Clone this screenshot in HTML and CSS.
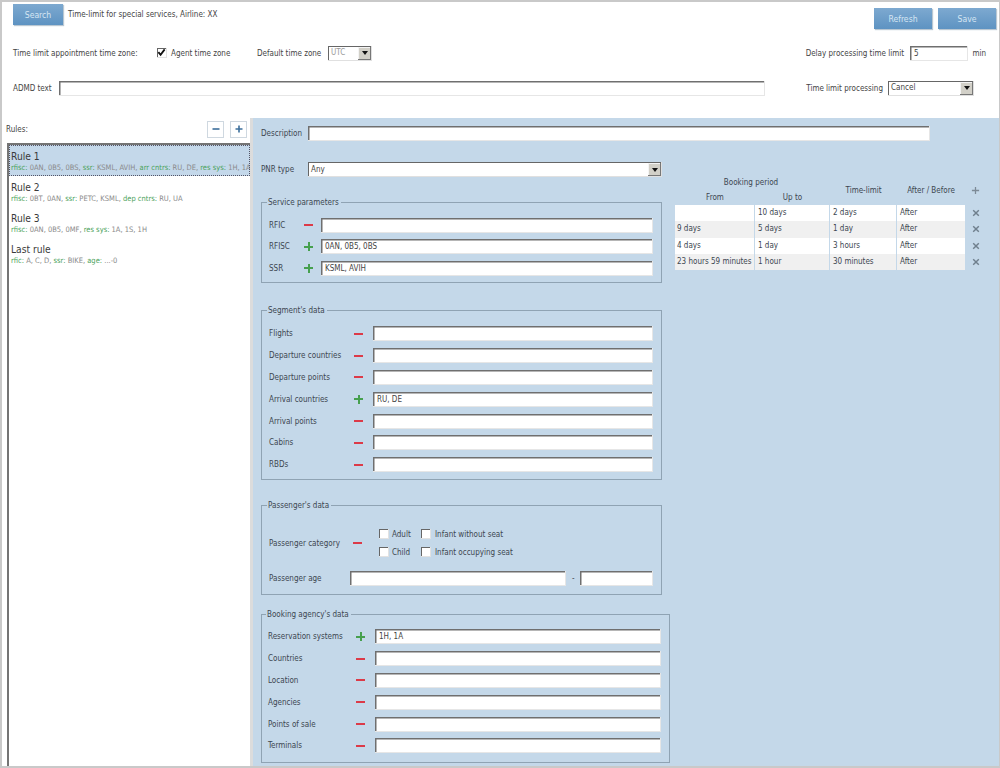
FILE: index.html
```html
<!DOCTYPE html>
<html lang="en">
<head>
<meta charset="utf-8">
<title>Time-limit for special services</title>
<link rel="stylesheet" href="styles.css">
</head>
<body>
<div class="app">
  <header class="top">
    <div class="row-title">
      <button class="btn btn-search">Search</button>
      <span class="title">Time-limit for special services, Airline: XX</span>
      <span class="spacer"></span>
      <button class="btn btn-refresh">Refresh</button>
      <button class="btn btn-save">Save</button>
    </div>
    <div class="row-zone">
      <span class="zone-label">Time limit appointment time zone:</span>
      <span class="box checked"><svg viewBox="0 0 10 10" width="9" height="9"><path d="M1.5 4.5 L4 7.5 L8.5 1.5" fill="none" stroke="#111" stroke-width="2"/></svg></span>
      <span class="agent">Agent time zone</span>
      <span class="default-label">Default time zone</span>
      <div class="select sel-utc"><span class="muted">UTC</span><span class="arrow"><i></i></span></div>
      <span class="spacer"></span>
      <span>Delay processing time limit</span>
      <div class="input delay">5</div>
      <span class="min">min</span>
    </div>
    <div class="row-admd">
      <span class="admd-label">ADMD text</span>
      <div class="input admd"></div>
      <span class="spacer"></span>
      <span>Time limit processing</span>
      <div class="select sel-proc"><span>Cancel</span><span class="arrow"><i></i></span></div>
    </div>
  </header>
  <div class="main">
    <aside class="left">
      <div class="rules-head">
        <span>Rules:</span>
        <span class="spacer"></span>
        <span class="sq"><svg viewBox="0 0 10 10" width="10" height="10"><path d="M1.5 5H8.5" stroke="#3c6f9c" stroke-width="1.6"/></svg></span>
        <span class="sq"><svg viewBox="0 0 10 10" width="10" height="10"><path d="M1.5 5H8.5M5 1.5V8.5" stroke="#3c6f9c" stroke-width="1.6"/></svg></span>
      </div>
      <ul class="rules">
        <li class="rule selected"><div class="rule-name">Rule 1</div><div class="rule-sub"><b>rfisc:</b> 0AN, 0B5, 0BS, <b>ssr:</b> KSML, AVIH, <b>arr cntrs:</b> RU, DE, <b>res sys:</b> 1H, 1A</div></li>
        <li class="rule"><div class="rule-name">Rule 2</div><div class="rule-sub"><b>rfisc:</b> 0BT, 0AN, <b>ssr:</b> PETC, KSML, <b>dep cntrs:</b> RU, UA</div></li>
        <li class="rule"><div class="rule-name">Rule 3</div><div class="rule-sub"><b>rfisc:</b> 0AN, 0B5, 0MF, <b>res sys:</b> 1A, 1S, 1H</div></li>
        <li class="rule"><div class="rule-name">Last rule</div><div class="rule-sub"><b>rfic:</b> A, C, D, <b>ssr:</b> BIKE, <b>age:</b> ...-0</div></li>
      </ul>
    </aside>
    <section class="panel">
      <div class="row-desc">
        <span class="lbl-head">Description</span>
        <div class="input desc"></div>
      </div>
      <div class="columns">
        <div class="form">
          <div class="row-pnr">
            <span class="lbl-head">PNR type</span>
            <div class="select sel-pnr"><span>Any</span><span class="arrow"><i></i></span></div>
          </div>

          <fieldset class="group g-service">
            <legend>Service parameters</legend>
            <div class="frow"><label>RFIC</label><span class="minus"></span><div class="input"></div></div>
            <div class="frow"><label>RFISC</label><span class="plus"></span><div class="input">0AN, 0B5, 0BS</div></div>
            <div class="frow"><label>SSR</label><span class="plus"></span><div class="input">KSML, AVIH</div></div>
          </fieldset>

          <fieldset class="group g-segment">
            <legend>Segment's data</legend>
            <div class="frow"><label>Flights</label><span class="minus"></span><div class="input"></div></div>
            <div class="frow"><label>Departure countries</label><span class="minus"></span><div class="input"></div></div>
            <div class="frow"><label>Departure points</label><span class="minus"></span><div class="input"></div></div>
            <div class="frow"><label>Arrival countries</label><span class="plus"></span><div class="input">RU, DE</div></div>
            <div class="frow"><label>Arrival points</label><span class="minus"></span><div class="input"></div></div>
            <div class="frow"><label>Cabins</label><span class="minus"></span><div class="input"></div></div>
            <div class="frow"><label>RBDs</label><span class="minus"></span><div class="input"></div></div>
          </fieldset>

          <fieldset class="group g-pass">
            <legend>Passenger's data</legend>
            <div class="pcat">
              <label>Passenger category</label><span class="minus"></span>
              <div class="checks">
                <span class="box"></span><span>Adult</span><span class="box"></span><span>Infant without seat</span>
                <span class="box"></span><span>Child</span><span class="box"></span><span>Infant occupying seat</span>
              </div>
            </div>
            <div class="page">
              <label>Passenger age</label>
              <div class="input age-from"></div><span class="dash">-</span><div class="input age-to"></div>
            </div>
          </fieldset>

          <fieldset class="group g-agency">
            <legend>Booking agency's data</legend>
            <div class="frow"><label>Reservation systems</label><span class="plus"></span><div class="input">1H, 1A</div></div>
            <div class="frow"><label>Countries</label><span class="minus"></span><div class="input"></div></div>
            <div class="frow"><label>Location</label><span class="minus"></span><div class="input"></div></div>
            <div class="frow"><label>Agencies</label><span class="minus"></span><div class="input"></div></div>
            <div class="frow"><label>Points of sale</label><span class="minus"></span><div class="input"></div></div>
            <div class="frow"><label>Terminals</label><span class="minus"></span><div class="input"></div></div>
          </fieldset>
        </div>

        <div class="period">
          <div class="phead">
            <div class="ph-group">
              <div class="ph-title">Booking period</div>
              <div class="ph-sub"><span>From</span><span>Up to</span></div>
            </div>
            <div class="ph-tl">Time-limit</div>
            <div class="ph-ab">After / Before</div>
            <div class="ph-act"><svg viewBox="0 0 10 10" width="9" height="9"><path d="M1 5H9M5 1V9" stroke="#7d8a96" stroke-width="1.4"/></svg></div>
          </div>
          <div class="prow odd"><span></span><span>10 days</span><span>2 days</span><span>After</span><em><svg viewBox="0 0 10 10" width="8" height="8"><path d="M1.5 1.5L8.5 8.5M8.5 1.5L1.5 8.5" stroke="#6f7f8d" stroke-width="1.8"/></svg></em></div>
          <div class="prow"><span>9 days</span><span>5 days</span><span>1 day</span><span>After</span><em><svg viewBox="0 0 10 10" width="8" height="8"><path d="M1.5 1.5L8.5 8.5M8.5 1.5L1.5 8.5" stroke="#6f7f8d" stroke-width="1.8"/></svg></em></div>
          <div class="prow odd"><span>4 days</span><span>1 day</span><span>3 hours</span><span>After</span><em><svg viewBox="0 0 10 10" width="8" height="8"><path d="M1.5 1.5L8.5 8.5M8.5 1.5L1.5 8.5" stroke="#6f7f8d" stroke-width="1.8"/></svg></em></div>
          <div class="prow"><span>23 hours 59 minutes</span><span>1 hour</span><span>30 minutes</span><span>After</span><em><svg viewBox="0 0 10 10" width="8" height="8"><path d="M1.5 1.5L8.5 8.5M8.5 1.5L1.5 8.5" stroke="#6f7f8d" stroke-width="1.8"/></svg></em></div>
        </div>
      </div>
    </section>
  </div>
</div>
</body>
</html>
```

FILE: styles.css
```css
* { box-sizing: border-box; }
html, body { margin: 0; padding: 0; }
body {
  width: 1000px;
  height: 768px;
  overflow: hidden;
  background: #fff;
  font-family: "DejaVu Sans", "Noto Sans", sans-serif;
  font-stretch: condensed;
  font-size: 8px;
  color: #444;
}
.app {
  width: 1000px;
  height: 768px;
  border: solid #c9c9c9;
  border-width: 2px 1px 2px 2px;
  display: flex;
  flex-direction: column;
  overflow: hidden;
}
.spacer { flex: 1; }
.top { height: 116px; flex: none; padding: 0 0 0 11px; white-space: nowrap; }
.row-title { display: flex; align-items: flex-start; height: 27px; margin-top: 2px; padding-right: 3px; }
.btn {
  border: 0;
  height: 21px;
  padding: 0;
  color: #d6e6f3;
  font: inherit;
  font-size: 8.6px;
  background: linear-gradient(#7da9d0, #5e93c2);
  box-shadow: 1px 1px 1px #b9c7d2;
}
.btn-search { width: 50px; }
.title { margin-left: 5px; line-height: 21px; }
.btn-refresh { width: 58px; margin-right: 6px; margin-top: 4px; }
.btn-save { width: 58px; margin-top: 4px; }
.row-zone { display: flex; align-items: center; height: 18px; margin-top: 13px; padding-right: 13px; }
.zone-label { width: 144px; }
.box {
  flex: none;
  width: 10px;
  height: 10px;
  display: inline-flex;
  align-items: center;
  justify-content: center;
  background: #fff;
  border: solid #e2e2e2;
  border-width: 0 1px 1px 0;
  box-shadow: inset 1px 1px 0 #666;
}
.agent { margin-left: 4px; width: 86px; }
.default-label { width: 71px; }
.select {
  display: flex;
  align-items: center;
  justify-content: space-between;
  background: #fff;
  border: solid #e0e0e0;
  border-width: 0 1px 1px 0;
  box-shadow: inset 1px 1px 0 #666;
  padding-left: 3px;
  height: 15px;
  color: #444;
}
.muted { color: #999; }
.arrow {
  width: 13px;
  height: 13px;
  margin-top: 1px;
  background: #d2d0c8;
  box-shadow: inset -1px -1px 0 #777, inset 1px 1px 0 #f4f4f4;
  display: flex;
  align-items: center;
  justify-content: center;
}
.arrow i {
  width: 0;
  height: 0;
  border: 3px solid transparent;
  border-top: 4px solid #111;
  border-bottom: 0;
}
.sel-utc { width: 44px; }
.sel-proc { width: 86px; margin-left: 5px; }
.sel-pnr { width: 354px; }
.input {
  background: #fff;
  border: solid #e6e6e6;
  border-width: 0 1px 1px 0;
  box-shadow: inset 2px 2px 0 -0.5px #6f6f6f;
  height: 15px;
  line-height: 15px;
  padding-left: 4px;
  color: #444;
}
.delay { width: 58px; margin-left: 6px; }
.min { margin-left: 4px; width: 14px; text-align: right; }
.row-admd { display: flex; align-items: center; height: 16px; margin-top: 18px; padding-right: 25px; }
.admd-label { width: 46px; }
.admd { width: 706px; }
.main { flex: 1; display: flex; min-height: 0; }
.left { width: 248px; flex: none; padding-left: 3px; display: flex; flex-direction: column; background: #fff; }
.rules-head { display: flex; align-items: center; height: 18px; margin-top: 2px; padding-right: 3px; gap: 6px; }
.rules-head > span:first-child { margin-left: 1px; margin-right: -6px; }
.sq {
  width: 17px;
  height: 17px;
  display: flex;
  align-items: center;
  justify-content: center;
  background: #fff;
  border: 1px solid #cfd8e0;
}
.rules {
  list-style: none;
  margin: 5px 0 0 2px;
  padding: 0;
  flex: 1;
  border: solid #747474;
  border-width: 2px 0 0 2px;
  overflow: hidden;
}
.rule { height: 31px; padding: 5px 0 0 2px; white-space: nowrap; overflow: hidden; }
.rule.selected { background: #c4d8ea; outline: 1px dotted #556; outline-offset: -1px; }
.rule-name { font-size: 10.2px; line-height: 13px; color: #3a3a3a; }
.rule-sub { font-size: 7.5px; line-height: 9px; color: #8a8a8a; }
.rule-sub b { font-weight: 400; color: #4ba25a; }
.panel {
  flex: 1;
  background: #c4d8e9;
  border-left: 3px solid #dcdcdc;
  padding: 8px 0 0 8px;
  min-width: 0;
  color: #3c4650;
}
.row-desc { display: flex; align-items: center; height: 15px; }
.lbl-head { width: 47px; flex: none; }
.desc { width: 622px; }
.columns { display: flex; align-items: flex-start; }
.form { width: 414px; flex: none; }
.row-pnr { display: flex; align-items: center; margin-top: 21px; height: 15px; }
.group {
  margin: 0;
  border: 1px solid #8fa3b3;
  min-width: 0;
  padding: 0 8px 0 7px;
  width: 401px;
}
.group legend { padding: 0 2px 0 1px; margin-left: -2px; line-height: 11px; color: #3c4650; }
.g-service { margin-top: 20px; height: 86px; padding-top: 6.5px; }
.g-segment { margin-top: 22px; height: 175px; padding-top: 7px; }
.g-pass { margin-top: 20px; height: 95px; padding-top: 8px; }
.g-agency { margin-top: 14px; height: 154px; width: 409px; padding-top: 6px; padding-left: 6px; }
.frow { display: flex; align-items: center; height: 21.8px; }
.frow label { flex: none; }
.frow .input { flex: 1; }
.g-service .frow { height: 21.5px; }
.g-service .frow label { width: 35px; }
.g-segment .frow label { width: 85px; }
.g-agency .frow label { width: 88px; }
.g-service .minus, .g-service .plus { margin-right: 8px; }
.g-segment .minus, .g-segment .plus { margin-right: 10px; }
.g-agency .minus, .g-agency .plus { margin-right: 10px; }
.minus, .plus { position: relative; width: 9px; height: 9px; flex: none; }
.minus::before, .plus::before {
  content: "";
  position: absolute;
  left: 0;
  right: 0;
  top: 3.5px;
  height: 2px;
}
.minus::before { background: #dc3a48; }
.plus::before { background: #46a04e; }
.plus::after {
  content: "";
  position: absolute;
  top: 0;
  bottom: 0;
  left: 3.5px;
  width: 2px;
  background: #46a04e;
}
.pcat { display: flex; align-items: center; margin-top: 10px; }
.pcat label { width: 84px; }
.pcat .minus { margin-right: 17px; }
.checks {
  display: grid;
  grid-template-columns: 13px 29px 14px auto;
  align-items: center;
  row-gap: 8px;
}
.page { display: flex; align-items: center; margin-top: 14px; }
.page label { width: 81px; }
.age-from { width: 218px; }
.dash { width: 14px; text-align: center; }
.age-to { width: 73px; }
.period { width: 305px; margin-top: 34px; color: #3c4650; }
.phead { display: grid; grid-template-columns: 155px 67px 68px 15px; height: 30px; text-align: center; align-items: center; }
.ph-title { line-height: 11px; margin-top: -1px; margin-left: -3px; }
.ph-sub { display: grid; grid-template-columns: 80px 75px; line-height: 11px; margin-top: 4px; }
.ph-act { display: flex; justify-content: flex-end; }
.prow {
  display: grid;
  grid-template-columns: 80px 75px 67px 68px 15px;
  height: 16.3px;
  line-height: 16px;
  background: #f0f0f0;
  width: 290px;
}
.prow.odd { background: #fff; }
.prow span { padding-left: 3px; border-right: 1px solid #c4d8e9; white-space: nowrap; }
.prow span:first-child { padding-left: 2px; }
.prow span:nth-child(4) { border-right: 0; }
.prow em { margin-left: 7px; display: flex; align-items: center; width: 15px; height: 16px; background: #c4d8e9; }
```
